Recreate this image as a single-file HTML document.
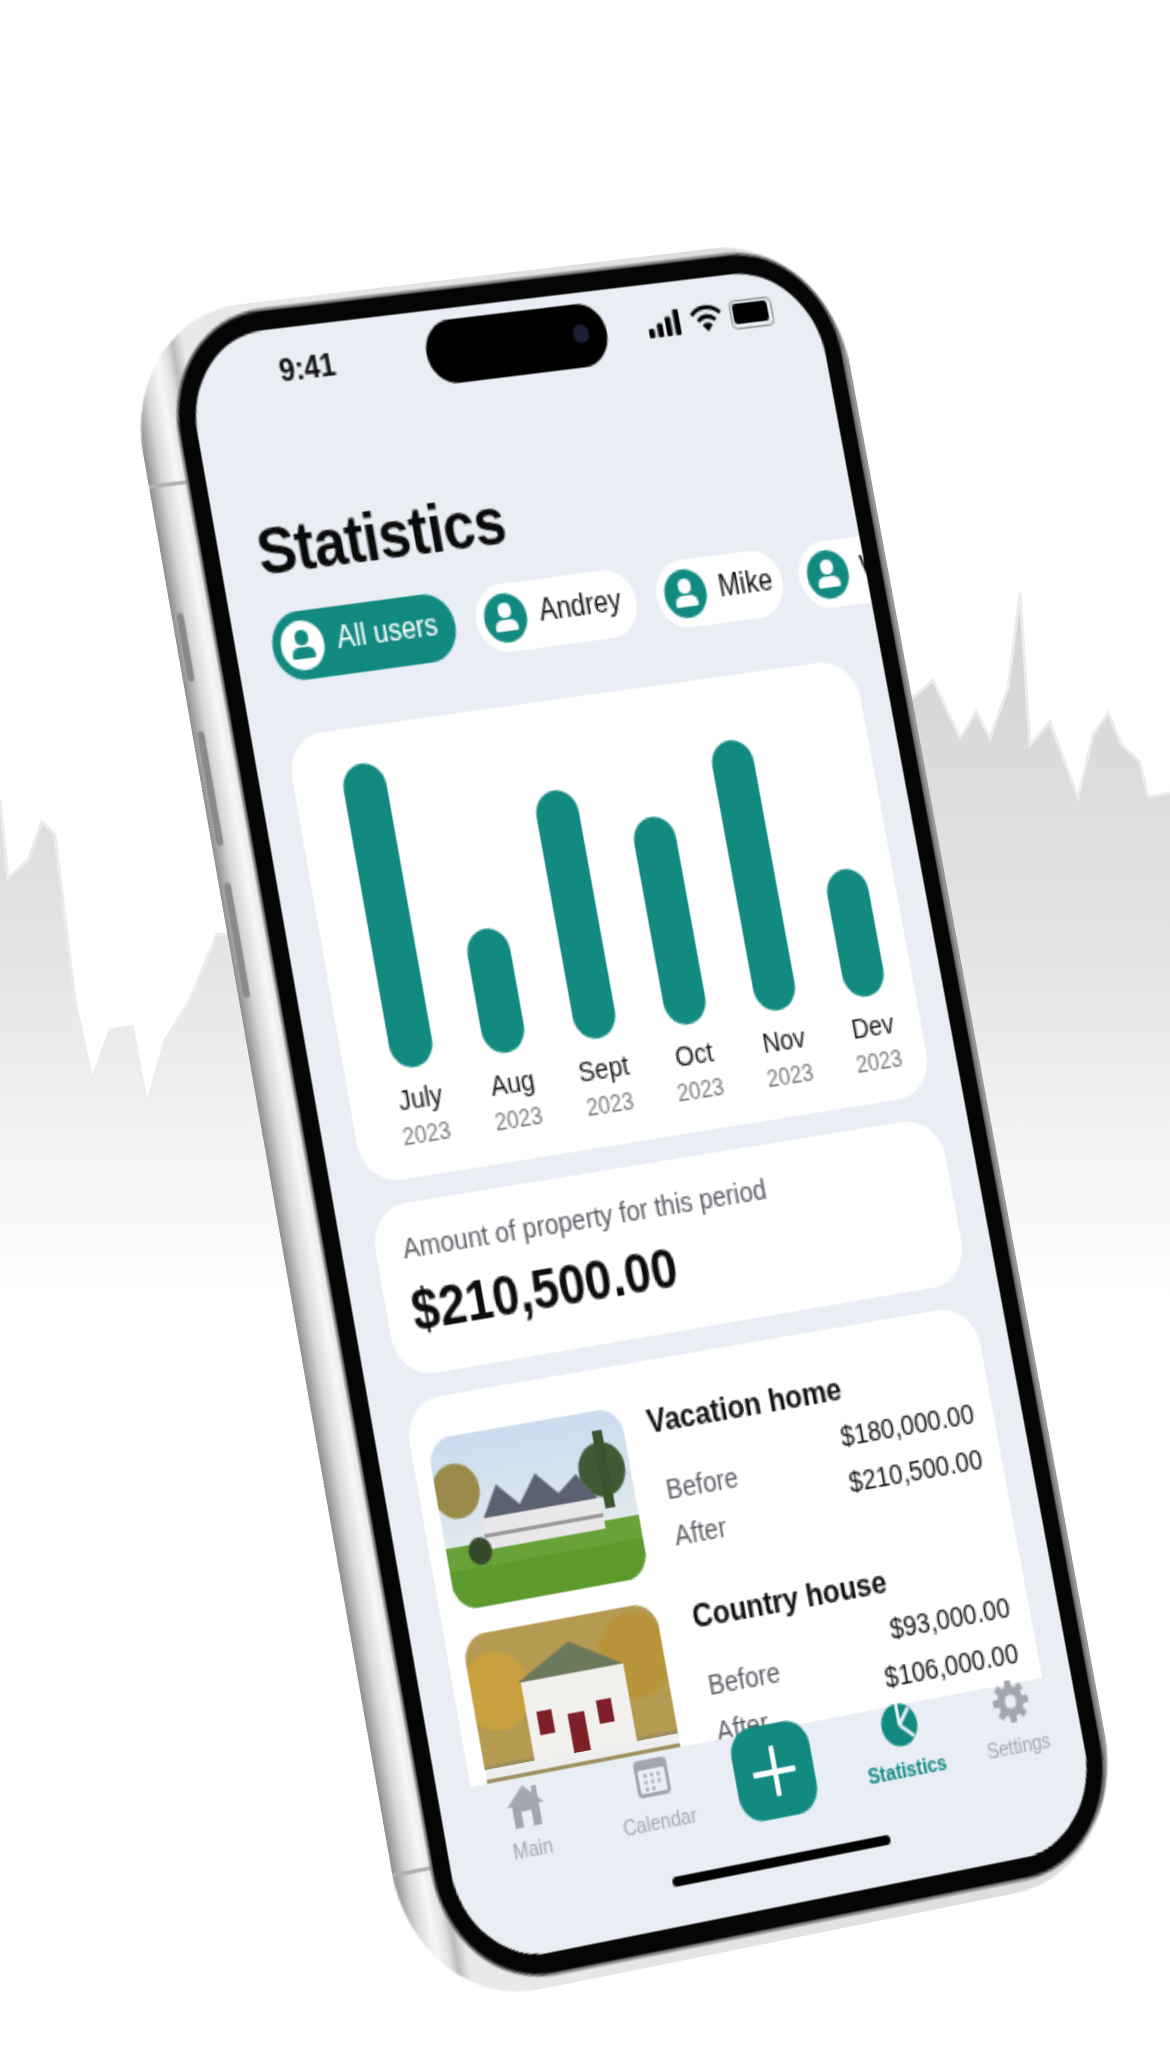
<!DOCTYPE html>
<html><head><meta charset="utf-8"><style>
html,body{margin:0;padding:0;background:#fff;}
body{width:1170px;height:2064px;position:relative;overflow:hidden;font-family:"Liberation Sans",sans-serif;}
#bg{position:absolute;left:0;top:0;}
#phone{position:absolute;left:0;top:0;width:390px;height:844px;transform-origin:0 0;
transform:matrix3d(1.67468,-0.171205,0,0.00007963,0.326841,1.874533,0,-0.00002822,0,0,1,0,181,340,0,1);}
.abs{position:absolute;}
#body{left:-34px;top:-15px;width:438px;height:876px;border-radius:72px;
background:linear-gradient(90deg,#8e8e8e 0,#d8d8d8 2%,#f7f7f7 4%,#e2e2e2 5.5%,#bcbcbc 6.5%,#e9e9e9 8%,#dcdcdc 96%,#7a7a7a 98%,#9a9a9a 100%);}
#bez{left:-10px;top:-10px;width:410px;height:864px;border-radius:60px;background:#050505;box-shadow:0 0 0 1.5px #6c6c6c;}
#screen{left:0;top:0;width:390px;height:844px;border-radius:50px;background:#e9eef5;overflow:hidden;}
.pill{position:absolute;top:148px;height:36px;border-radius:18px;background:#fff;display:flex;align-items:center;font-size:16px;color:#111;box-sizing:border-box;padding-left:5px;white-space:nowrap;}
.pill .ic{width:26px;height:26px;border-radius:13px;background:#128a80;margin-right:8px;position:relative;flex:none;}
.ic:before{content:"";position:absolute;left:9px;top:5px;width:8px;height:8px;border-radius:50%;background:#fff;}
.ic:after{content:"";position:absolute;left:6px;top:14px;width:14px;height:6px;border-radius:7px 7px 2px 2px;background:#fff;}
.pill.on{background:#128a80;color:#fff;}
.pill.on .ic{background:#fff;}
.pill.on .ic:before,.pill.on .ic:after{background:#128a80;}
.card{position:absolute;left:20px;width:352px;background:#fff;border-radius:22px;}
.bar{position:absolute;width:26px;border-radius:13px;background:#128a80;bottom:-1px;}
.mon{position:absolute;width:60px;text-align:center;font-size:15px;color:#1a1a1a;}
.yr{position:absolute;width:60px;text-align:center;font-size:13px;color:#7a7a7a;}
.t{position:absolute;white-space:nowrap;}
.tab{position:absolute;width:70px;text-align:center;font-size:11px;color:#a3a6ad;}
</style></head><body>
<svg id="bg" width="1170" height="2064" viewBox="0 0 1170 2064">
<defs><linearGradient id="g" x1="0" y1="600" x2="0" y2="1300" gradientUnits="userSpaceOnUse">
<stop offset="0" stop-color="#d3d3d3"/><stop offset="0.5" stop-color="#e4e4e4"/><stop offset="1" stop-color="#ffffff"/></linearGradient></defs>
<polygon fill="url(#g)" points="0,800 8,878 28,860 42,822 55,835 75,1000 92,1080 110,1030 132,1026 147,1105 165,1040 190,1000 217,934 232,936 300,1200 300,1500 0,1500"/>
<polyline fill="none" stroke="#ececec" stroke-width="3" points="0,800 8,878 28,860 42,822 55,835 75,1000 92,1080 110,1030 132,1026 147,1105 165,1040 190,1000 217,934 232,936"/>
<polygon fill="url(#g)" points="880,720 916,695 933,680 960,738 976,712 990,738 1008,688 1020,593 1030,745 1050,722 1078,798 1093,735 1108,713 1122,745 1140,762 1148,797 1170,793 1170,1500 900,1500"/>
<polyline fill="none" stroke="#ececec" stroke-width="3" points="880,720 916,695 933,680 960,738 976,712 990,738 1008,688 1020,593 1030,745 1050,722 1078,798 1093,735 1108,713 1122,745 1140,762 1148,797 1170,793"/>
</svg>
<div id="phone">
 <div class="abs" id="body"></div>
 <div class="abs" style="left:-31px;top:141px;width:4px;height:36px;border-radius:2px;background:#8a8a8a"></div>
 <div class="abs" style="left:-31px;top:203px;width:4px;height:60px;border-radius:2px;background:#8a8a8a"></div>
 <div class="abs" style="left:-31px;top:282px;width:4px;height:60px;border-radius:2px;background:#8a8a8a"></div>
 <div class="abs" style="left:-34px;top:73px;width:24px;height:2px;background:#b0b0b0"></div>
 <div class="abs" style="left:-34px;top:790px;width:24px;height:2px;background:#b0b0b0"></div>
 <div class="abs" id="bez"></div>
 <div class="abs" id="screen">
  <div class="t" style="left:55px;top:13px;font-size:17px;font-weight:bold;color:#111">9:41</div>
  <div class="abs" style="left:145px;top:6px;width:112px;height:34px;border-radius:17px;background:#000"></div>
  <div class="abs" style="left:236px;top:17px;width:10px;height:10px;border-radius:5px;background:#1b2233"></div>
  <svg class="abs" style="left:283px;top:15px" width="22" height="14"><rect x="0" y="9" width="3.5" height="5" rx="1"/><rect x="5.5" y="6.5" width="3.5" height="7.5" rx="1"/><rect x="11" y="3.5" width="3.5" height="10.5" rx="1"/><rect x="16.5" y="0" width="3.5" height="14" rx="1"/></svg>
  <svg class="abs" style="left:310px;top:14px" width="20" height="15" viewBox="0 0 20 15"><path d="M1 5.5 A13 13 0 0 1 19 5.5" stroke="#000" stroke-width="2.4" fill="none"/><path d="M4.5 9 A8 8 0 0 1 15.5 9" stroke="#000" stroke-width="2.4" fill="none"/><path d="M10 15 L6.8 11.6 A4.5 4.5 0 0 1 13.2 11.6 Z"/></svg>
  <div class="abs" style="left:335px;top:14px;width:22px;height:11px;border-radius:3.5px;border:1.2px solid #999;padding:1.3px;box-sizing:content-box"><div style="width:100%;height:100%;background:#000;border-radius:2px"></div></div>
  <div class="t" style="left:23px;top:96px;font-size:35px;font-weight:bold;color:#0a0a0a;letter-spacing:-0.5px">Statistics</div>
  <div class="pill on" style="left:22px;width:111px"><div class="ic"></div>All users</div>
  <div class="pill" style="left:146px;width:99px"><div class="ic"></div>Andrey</div>
  <div class="pill" style="left:258px;width:79px"><div class="ic"></div>Mike</div>
  <div class="pill" style="left:348px;width:90px"><div class="ic"></div>Will</div>
  <div class="card" style="top:212px;height:234px">
   <div class="bar" style="left:29px;top:19px;bottom:auto;height:159px"></div>
   <div class="bar" style="left:85px;top:113px;bottom:auto;height:65px"></div>
   <div class="bar" style="left:141px;top:47px;bottom:auto;height:131px"></div>
   <div class="bar" style="left:197px;top:68px;bottom:auto;height:110px"></div>
   <div class="bar" style="left:253px;top:34px;bottom:auto;height:144px"></div>
   <div class="bar" style="left:309px;top:110px;bottom:auto;height:68px"></div>
   <div class="mon" style="left:12px;top:186px">July</div><div class="yr" style="left:12px;top:205px">2023</div>
   <div class="mon" style="left:68px;top:186px">Aug</div><div class="yr" style="left:68px;top:205px">2023</div>
   <div class="mon" style="left:124px;top:186px">Sept</div><div class="yr" style="left:124px;top:205px">2023</div>
   <div class="mon" style="left:180px;top:186px">Oct</div><div class="yr" style="left:180px;top:205px">2023</div>
   <div class="mon" style="left:236px;top:186px">Nov</div><div class="yr" style="left:236px;top:205px">2023</div>
   <div class="mon" style="left:292px;top:186px">Dev</div><div class="yr" style="left:292px;top:205px">2023</div>
  </div>
  <div class="card" style="top:458px;height:88px">
   <div class="t" style="left:16px;top:15px;font-size:15px;color:#5c5f66">Amount of property for this period</div>
   <div class="t" style="left:15px;top:40px;font-size:29px;font-weight:bold;color:#0d0d0d">$210,500.00</div>
  </div>
  <div class="card" style="top:558px;height:320px">
   <svg class="abs" style="left:10px;top:21px;border-radius:14px" width="117" height="88" viewBox="0 0 117 88">
    <defs><linearGradient id="sk" x1="0" y1="0" x2="0" y2="1"><stop offset="0" stop-color="#c9dcee"/><stop offset="1" stop-color="#eef0ec"/></linearGradient></defs>
    <rect width="117" height="88" fill="url(#sk)"/>
    <circle cx="12" cy="28" r="14" fill="#9a8a4a"/><circle cx="100" cy="30" r="14" fill="#3f5a35"/><rect x="98" y="10" width="6" height="40" fill="#3c5330"/>
    <rect y="56" width="117" height="32" fill="#6aa23a"/><rect y="68" width="117" height="20" fill="#5d9a2e"/>
    <polygon points="24,46 36,28 48,40 60,26 72,38 84,30 96,46" fill="#5b6170"/>
    <rect x="24" y="44" width="72" height="16" fill="#e8e8ea"/><rect x="24" y="52" width="72" height="2" fill="#999"/>
    <circle cx="20" cy="60" r="7" fill="#354a2a"/>
   </svg>
   <div class="t" style="left:142px;top:22px;font-size:17px;font-weight:bold;color:#111">Vacation home</div>
   <div class="t" style="right:12px;top:48px;font-size:15px;color:#111">$180,000.00</div>
   <div class="t" style="right:12px;top:72px;font-size:15px;color:#111">$210,500.00</div>
   <div class="t" style="left:146px;top:59px;font-size:15px;color:#5c5f66">Before</div>
   <div class="t" style="left:146px;top:83px;font-size:15px;color:#5c5f66">After</div>
   <svg class="abs" style="left:10px;top:122px;border-radius:14px" width="117" height="88" viewBox="0 0 117 88">
    <rect width="117" height="88" fill="#b59a52"/><circle cx="15" cy="30" r="20" fill="#c8a040"/><circle cx="100" cy="25" r="22" fill="#b8943a"/><rect y="66" width="117" height="22" fill="#9f9060"/>
    <polygon points="28,28 62,12 92,28" fill="#6b7a5a"/><rect x="30" y="28" width="62" height="42" fill="#f2f0ec"/>
    <rect x="54" y="48" width="10" height="22" fill="#7d2028"/><rect x="36" y="44" width="9" height="12" fill="#7d2028"/><rect x="72" y="44" width="9" height="12" fill="#7d2028"/>
    <rect y="68" width="117" height="5" fill="#eee"/>
   </svg>
   <div class="t" style="left:148px;top:124px;font-size:17px;font-weight:bold;color:#111">Country house</div>
   <div class="t" style="right:12px;top:150px;font-size:15px;color:#111">$93,000.00</div>
   <div class="t" style="right:12px;top:174px;font-size:15px;color:#111">$106,000.00</div>
   <div class="t" style="left:150px;top:161px;font-size:15px;color:#5c5f66">Before</div>
   <div class="t" style="left:150px;top:185px;font-size:15px;color:#5c5f66">After</div>
  </div>
  <div class="abs" style="left:0;top:755px;width:390px;height:89px;background:#e9eef5"></div>
  <svg class="abs" style="left:37px;top:756px" width="26" height="26" viewBox="0 0 26 26"><path d="M13 3 L24 13 L21 13 L21 24 L5 24 L5 13 L2 13 Z" fill="#a3a6ad"/><rect x="10" y="16" width="6" height="8" fill="#e9eef5"/><rect x="18" y="4" width="3" height="6" fill="#a3a6ad"/></svg>
  <div class="tab" style="left:15px;top:786px">Main</div>
  <svg class="abs" style="left:115px;top:755px" width="24" height="24" viewBox="0 0 24 24"><rect x="2" y="3" width="20" height="19" rx="3" fill="#a3a6ad"/><rect x="4" y="8" width="16" height="12" rx="1" fill="#e9eef5"/><g fill="#a3a6ad"><circle cx="8" cy="11" r="1"/><circle cx="12" cy="11" r="1"/><circle cx="16" cy="11" r="1"/><circle cx="8" cy="14.5" r="1"/><circle cx="12" cy="14.5" r="1"/><circle cx="16" cy="14.5" r="1"/><circle cx="8" cy="18" r="1"/><circle cx="12" cy="18" r="1"/></g></svg>
  <div class="tab" style="left:92px;top:785px">Calendar</div>
  <div class="abs" style="left:176px;top:752px;width:48px;height:48px;border-radius:14px;background:#128a80"></div>
  <div class="abs" style="left:198.5px;top:763px;width:3px;height:26px;background:#fff;border-radius:1px"></div>
  <div class="abs" style="left:187px;top:774.5px;width:26px;height:3px;background:#fff;border-radius:1px"></div>
  <svg class="abs" style="left:268px;top:753px" width="24" height="24" viewBox="0 0 24 24"><circle cx="12" cy="12" r="11" fill="#128a80"/><path d="M12 12 L12 1 M12 12 L19 4 M12 12 L20 19" stroke="#e9eef5" stroke-width="2" fill="none"/></svg>
  <div class="tab" style="left:245px;top:783px;color:#128a80;font-weight:bold">Statistics</div>
  <svg class="abs" style="left:338px;top:752px" width="24" height="24" viewBox="0 0 24 24"><g fill="#a3a6ad"><circle cx="12" cy="12" r="8"/><rect x="10" y="1" width="4" height="22" rx="1"/><rect x="1" y="10" width="22" height="4" rx="1"/><rect x="10" y="1" width="4" height="22" rx="1" transform="rotate(45 12 12)"/><rect x="10" y="1" width="4" height="22" rx="1" transform="rotate(-45 12 12)"/></g><circle cx="12" cy="12" r="3.5" fill="#e9eef5"/></svg>
  <div class="tab" style="left:315px;top:782px">Settings</div>
  <div class="abs" style="left:128px;top:819px;width:134px;height:5px;border-radius:3px;background:#000"></div>
 </div>
</div>
</body></html>
